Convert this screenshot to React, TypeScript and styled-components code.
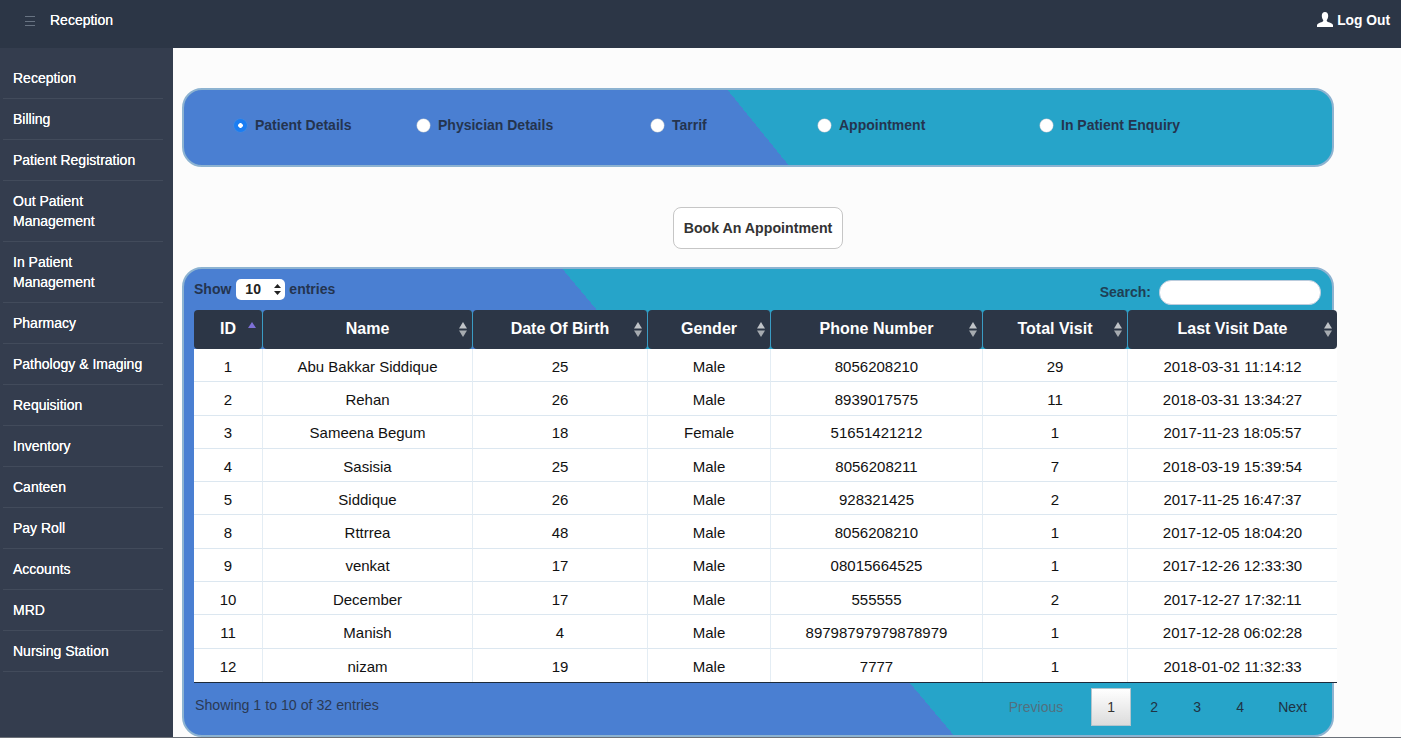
import styled, { createGlobalStyle } from "styled-components";

const menuItems = [
  "Reception",
  "Billing",
  "Patient Registration",
  "Out Patient Management",
  "In Patient Management",
  "Pharmacy",
  "Pathology & Imaging",
  "Requisition",
  "Inventory",
  "Canteen",
  "Pay Roll",
  "Accounts",
  "MRD",
  "Nursing Station",
];

const radios = [
  { label: "Patient Details", width: 183, checked: true },
  { label: "Physician Details", width: 234, checked: false },
  { label: "Tarrif", width: 167, checked: false },
  { label: "Appointment", width: 222, checked: false },
  { label: "In Patient Enquiry", width: 220, checked: false },
];

const columns = [
  { label: "ID", width: 69 },
  { label: "Name", width: 210 },
  { label: "Date Of Birth", width: 175 },
  { label: "Gender", width: 123 },
  { label: "Phone Number", width: 212 },
  { label: "Total Visit", width: 145 },
  { label: "Last Visit Date", width: 209 },
];

const rows = [
  ["1", "Abu Bakkar Siddique", "25", "Male", "8056208210", "29", "2018-03-31 11:14:12"],
  ["2", "Rehan", "26", "Male", "8939017575", "11", "2018-03-31 13:34:27"],
  ["3", "Sameena Begum", "18", "Female", "51651421212", "1", "2017-11-23 18:05:57"],
  ["4", "Sasisia", "25", "Male", "8056208211", "7", "2018-03-19 15:39:54"],
  ["5", "Siddique", "26", "Male", "928321425", "2", "2017-11-25 16:47:37"],
  ["8", "Rttrrea", "48", "Male", "8056208210", "1", "2017-12-05 18:04:20"],
  ["9", "venkat", "17", "Male", "08015664525", "1", "2017-12-26 12:33:30"],
  ["10", "December", "17", "Male", "555555", "2", "2017-12-27 17:32:11"],
  ["11", "Manish", "4", "Male", "89798797979878979", "1", "2017-12-28 06:02:28"],
  ["12", "nizam", "19", "Male", "7777", "1", "2018-01-02 11:32:33"],
];

const SortIcon = () => (
  <svg width="8" height="15" viewBox="0 0 8 15">
    <path d="M4 0 L8 6.5 L0 6.5 Z" fill="#c0c4c8" />
    <path d="M4 15 L8 8.5 L0 8.5 Z" fill="#a6abb0" />
  </svg>
);

const SortedIcon = () => (
  <svg width="8" height="15" viewBox="0 0 8 15">
    <path d="M4 0 L8 6 L0 6 Z" fill="#7d70d6" />
  </svg>
);

const UserIcon = () => (
  <svg width="16" height="15" viewBox="0 0 16 15">
    <path
      d="M8 0 C10 0 11.2 1.5 11.2 3.7 C11.2 5.6 10.5 7.2 9.8 8 C9.6 9 10 9.6 10.9 9.9 C13.3 10.7 15.6 11.4 16 13 L16 15 L0 15 L0 13 C0.4 11.4 2.7 10.7 5.1 9.9 C6 9.6 6.4 9 6.2 8 C5.5 7.2 4.8 5.6 4.8 3.7 C4.8 1.5 6 0 8 0 Z"
      fill="#ffffff"
    />
  </svg>
);

export default function App() {
  return (
    <>
      <GlobalStyle />
      <Page>
        <TopBar>
          <TopLeft>
            <Hamburger>
              <span />
              <span />
              <span />
            </Hamburger>
            <TopTitle>Reception</TopTitle>
          </TopLeft>
          <LogOut>
            <UserIcon />
            Log Out
          </LogOut>
        </TopBar>
        <Body>
          <Sidebar>
            {menuItems.map((item) => (
              <MenuItem key={item}>
                <MenuText>{item}</MenuText>
              </MenuItem>
            ))}
          </Sidebar>
          <Main>
            <RadioPanel>
              {radios.map((r) => (
                <RadioItem key={r.label} $width={r.width}>
                  <RadioInput type="radio" name="view" defaultChecked={r.checked} />
                  {r.label}
                </RadioItem>
              ))}
            </RadioPanel>
            <BookRow>
              <BookButton>Book An Appointment</BookButton>
            </BookRow>
            <TablePanel>
              <Controls>
                <ShowEntries>
                  Show
                  <SelectBox>
                    10
                    <SelectArrows viewBox="0 0 7 11">
                      <path d="M3.5 0 L7 4 L0 4 Z" fill="#222" />
                      <path d="M3.5 11 L7 7 L0 7 Z" fill="#222" />
                    </SelectArrows>
                  </SelectBox>
                  entries
                </ShowEntries>
                <SearchWrap>
                  Search:
                  <SearchInput type="text" />
                </SearchWrap>
              </Controls>
              <DataTable>
                <colgroup>
                  {columns.map((c) => (
                    <col key={c.label} width={c.width} />
                  ))}
                </colgroup>
                <thead>
                  <tr>
                    {columns.map((c, i) => (
                      <HeadCell key={c.label}>
                        {c.label}
                        <SortSlot $sorted={i === 0}>
                          {i === 0 ? <SortedIcon /> : <SortIcon />}
                        </SortSlot>
                      </HeadCell>
                    ))}
                  </tr>
                </thead>
                <tbody>
                  {rows.map((row) => (
                    <BodyRow key={row[0]}>
                      {row.map((cell, i) => (
                        <BodyCell key={i}>{cell}</BodyCell>
                      ))}
                    </BodyRow>
                  ))}
                </tbody>
              </DataTable>
              <Footer>
                <Info>Showing 1 to 10 of 32 entries</Info>
                <Pagination>
                  <PageLink $muted>Previous</PageLink>
                  <PageButton $active>1</PageButton>
                  <PageButton>2</PageButton>
                  <PageButton>3</PageButton>
                  <PageButton>4</PageButton>
                  <PageLink>Next</PageLink>
                </Pagination>
              </Footer>
            </TablePanel>
          </Main>
        </Body>
      </Page>
    </>
  );
}

const GlobalStyle = createGlobalStyle`
  html, body {
    margin: 0;
    padding: 0;
    overflow: hidden;
  }
  body {
    font-family: "Liberation Sans", Arial, sans-serif;
    font-size: 14px;
    background: #fcfcfc;
  }
`;

const Page = styled.div`
  display: flex;
  flex-direction: column;
  width: 1401px;
  height: 738px;
  box-sizing: border-box;
  border-bottom: 1px solid #6b7078;
  overflow: hidden;
`;

const TopBar = styled.header`
  display: flex;
  justify-content: space-between;
  flex: 0 0 48px;
  background: #2c3646;
  color: #fff;
`;

const TopLeft = styled.div`
  display: flex;
  align-items: flex-start;
  padding: 13px 0 0 25px;
`;

const Hamburger = styled.div`
  display: flex;
  flex-direction: column;
  gap: 3.6px;
  width: 10px;
  margin-top: 3px;

  span {
    display: block;
    height: 1px;
    background: #687382;
  }
`;

const TopTitle = styled.div`
  margin-left: 15px;
  line-height: 15px;
  font-size: 14px;
  text-shadow: 0 0 0.6px #fff;
`;

const LogOut = styled.div`
  display: flex;
  align-items: flex-start;
  gap: 4px;
  padding: 12px 11px 0 0;
  line-height: 17px;
  font-size: 13.8px;
  font-weight: bold;
`;

const Body = styled.div`
  display: flex;
  flex: 1;
  min-height: 0;
`;

const Sidebar = styled.nav`
  flex: 0 0 173px;
  box-sizing: border-box;
  padding: 10px 10px 0 3px;
  background: #343d4e;
`;

const MenuItem = styled.div`
  padding: 10px 15px 10px 10px;
  border-bottom: 1px solid #424b5b;
`;

const MenuText = styled.div`
  color: #fff;
  font-size: 14px;
  line-height: 20px;
  text-shadow: 0 0 0.6px #fff;
`;

const Main = styled.main`
  flex: 1;
  padding: 40px 0 0 9px;
  min-width: 0;
`;

const RadioPanel = styled.section`
  display: flex;
  align-items: center;
  box-sizing: border-box;
  width: 1152px;
  height: 79px;
  padding: 0 0 5px 50px;
  border: 2px solid #8db3d1;
  border-radius: 20px;
  background: linear-gradient(51deg, #4a7fd2 50%, #26a4c9 50%);
`;

const RadioItem = styled.label<{ $width: number }>`
  display: flex;
  align-items: center;
  flex: 0 0 ${(p) => p.$width}px;
  color: #24344f;
  font-size: 14px;
  font-weight: bold;
`;

const RadioInput = styled.input`
  appearance: none;
  width: 13px;
  height: 13px;
  margin: 0 8px 0 0;
  border-radius: 50%;
  background: #fff;
  box-shadow: 0 0 0 0.5px #b9c4cf;

  &:checked {
    background: radial-gradient(circle, #fff 0 2px, #1a7df2 2.6px);
    box-shadow: 0 0 0 0.5px #3d8fe8;
  }
`;

const BookRow = styled.div`
  display: flex;
  justify-content: center;
  width: 1152px;
  margin: 40px 0 18px;
`;

const BookButton = styled.button`
  width: 170px;
  height: 42px;
  padding: 0;
  border: 1px solid #c6c6c6;
  border-radius: 8px;
  background: #fff;
  color: #333;
  font-family: inherit;
  font-size: 14.2px;
  font-weight: bold;
`;

const TablePanel = styled.section`
  box-sizing: border-box;
  width: 1152px;
  height: 470px;
  padding: 0 11px 0 10px;
  border: 2px solid #8db3d1;
  border-radius: 20px;
  background: linear-gradient(50deg, #4a7fd2 50%, #26a4c9 50%);
`;

const Controls = styled.div`
  display: flex;
  justify-content: space-between;
  height: 41px;
`;

const ShowEntries = styled.div`
  display: flex;
  align-items: center;
  gap: 4px;
  height: 20px;
  margin-top: 10px;
  color: #24344f;
  font-weight: bold;
`;

const SelectBox = styled.div`
  display: flex;
  align-items: center;
  justify-content: space-between;
  box-sizing: border-box;
  width: 49px;
  height: 21px;
  margin-left: 1px;
  padding: 0 4px 0 9px;
  border-radius: 5px;
  background: #fff;
  color: #222;
`;

const SelectArrows = styled.svg`
  width: 7px;
  height: 11px;
`;

const SearchWrap = styled.div`
  display: flex;
  align-items: flex-start;
  gap: 8px;
  height: 25px;
  margin-top: 11px;
  line-height: 24px;
  color: #1f3f55;
  font-weight: bold;
`;

const SearchInput = styled.input`
  box-sizing: border-box;
  width: 162px;
  height: 25px;
  padding: 0 8px;
  border: 1px solid #bcd;
  border-radius: 12px;
  background: #fff;
  outline: none;
`;

const DataTable = styled.table`
  table-layout: fixed;
  width: 1143px;
  border-collapse: separate;
  border-spacing: 0;
  border-bottom: 1px solid #1c2a3a;
`;

const HeadCell = styled.th`
  position: relative;
  height: 39px;
  padding: 0 0 2px;
  box-sizing: border-box;
  border-right: 1px solid #3a9cc4;
  border-radius: 4px;
  background: #2c3646;
  color: #fff;
  font-size: 16px;
  font-weight: bold;
  text-align: center;

  &:last-child {
    border-right: 0;
  }
`;

const SortSlot = styled.span<{ $sorted: boolean }>`
  position: absolute;
  top: 12px;
  right: ${(p) => (p.$sorted ? 6 : 5)}px;
  display: flex;
`;

const BodyRow = styled.tr`
  height: 33.3px;
  background: #fff;
`;

const BodyCell = styled.td`
  padding: 2px 0 0;
  box-sizing: border-box;
  border-right: 1px solid #e4edf4;
  border-bottom: 1px solid #dce7f0;
  color: #111;
  font-size: 15px;
  text-align: center;

  &:last-child {
    border-right: 0;
  }
  tr:last-child > & {
    border-bottom: 0;
  }
`;

const Footer = styled.div`
  display: flex;
  justify-content: space-between;
  align-items: flex-start;
  padding: 5px 0 0 1px;
`;

const Info = styled.div`
  margin-top: 9px;
  color: #2a3a55;
  font-size: 14.2px;
`;

const Pagination = styled.div`
  display: flex;
  align-items: center;
  gap: 3px;
  height: 38px;
  margin-right: -1px;
`;

const PageLink = styled.span<{ $muted?: boolean }>`
  padding: 0 15px;
  margin-right: ${(p) => (p.$muted ? 10 : 0)}px;
  color: ${(p) => (p.$muted ? "#52707f" : "#1f3344")};
  font-size: 14px;
`;

const PageButton = styled.span<{ $active?: boolean }>`
  display: flex;
  align-items: center;
  justify-content: center;
  box-sizing: border-box;
  width: 40px;
  height: 38px;
  border: 1px solid ${(p) => (p.$active ? "#b4c4cc" : "transparent")};
  background: ${(p) => (p.$active ? "linear-gradient(#ffffff, #dcdcdc)" : "none")};
  color: ${(p) => (p.$active ? "#333" : "#1f3344")};
  font-size: 14px;
`;
